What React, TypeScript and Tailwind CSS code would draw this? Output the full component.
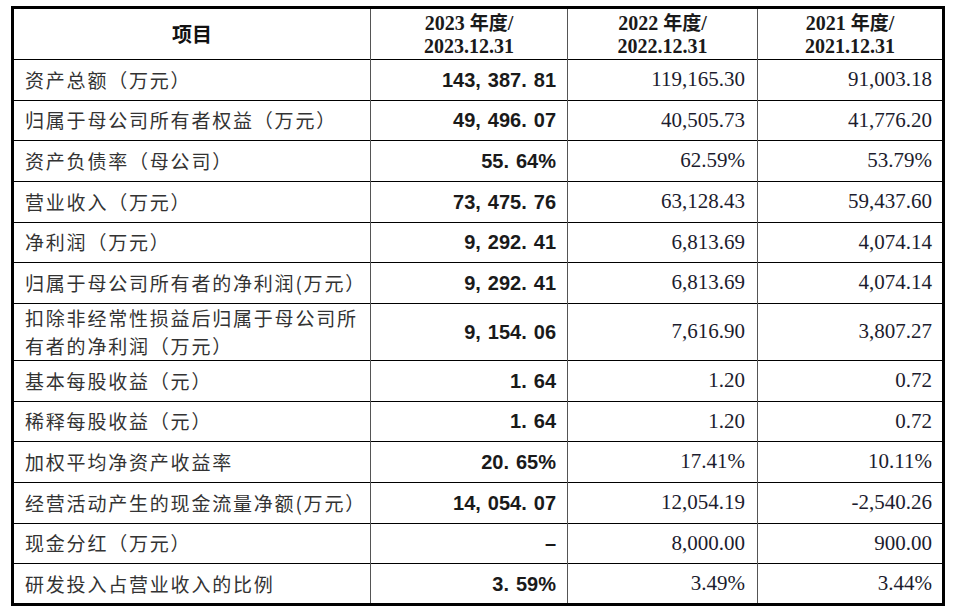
import React from 'react';

type Row = { label: React.ReactNode; cur: string; y22: string; y21: string; tall?: boolean };

const rows: Row[] = [
  { label: '资产总额（万元）', cur: '143,387.81', y22: '119,165.30', y21: '91,003.18' },
  { label: '归属于母公司所有者权益（万元）', cur: '49,496.07', y22: '40,505.73', y21: '41,776.20' },
  { label: '资产负债率（母公司）', cur: '55.64%', y22: '62.59%', y21: '53.79%' },
  { label: '营业收入（万元）', cur: '73,475.76', y22: '63,128.43', y21: '59,437.60' },
  { label: '净利润（万元）', cur: '9,292.41', y22: '6,813.69', y21: '4,074.14' },
  { label: '归属于母公司所有者的净利润(万元）', cur: '9,292.41', y22: '6,813.69', y21: '4,074.14' },
  {
    label: (
      <>
        扣除非经常性损益后归属于母公司所
        <br />
        有者的净利润（万元）
      </>
    ),
    cur: '9,154.06',
    y22: '7,616.90',
    y21: '3,807.27',
    tall: true,
  },
  { label: '基本每股收益（元）', cur: '1.64', y22: '1.20', y21: '0.72' },
  { label: '稀释每股收益（元）', cur: '1.64', y22: '1.20', y21: '0.72' },
  { label: '加权平均净资产收益率', cur: '20.65%', y22: '17.41%', y21: '10.11%' },
  { label: '经营活动产生的现金流量净额(万元）', cur: '14,054.07', y22: '12,054.19', y21: '-2,540.26' },
  { label: '现金分红（万元）', cur: '–', y22: '8,000.00', y21: '900.00' },
  { label: '研发投入占营业收入的比例', cur: '3.59%', y22: '3.49%', y21: '3.44%' },
];

// bold figures in the source use wide punctuation, so give "," and "." some room
function Wide({ text }: { text: string }) {
  return (
    <>
      {text.split('').map((c, i) =>
        c === ',' || c === '.' ? (
          <span key={i} className="mr-[7px]">
            {c}
          </span>
        ) : (
          <React.Fragment key={i}>{c}</React.Fragment>
        )
      )}
    </>
  );
}

export default function App() {
  return (
    <div className="w-[954px] h-[607px] bg-white pt-[6px] pl-[11px]">
      <table className="table-fixed border-collapse border-[3px] border-black w-[931px]">
        <colgroup>
          <col className="w-[358px]" />
          <col className="w-[197px]" />
          <col className="w-[190px]" />
          <col className="w-[186px]" />
        </colgroup>
        <thead>
          <tr className="h-[52px] border-b border-black">
            <th className="border-r border-[#555] text-[20px] font-bold text-[#111] font-['Noto_Sans_CJK_SC',sans-serif]">
              项目
            </th>
            {['2023', '2022', '2021'].map((y, i) => (
              <th
                key={y}
                className={`${i < 2 ? 'border-r border-[#555]' : ''} text-[20px] leading-[23px] font-bold text-[#1a1a1a] font-['Liberation_Serif','Noto_Sans_CJK_SC',serif]`}
              >
                <div>
                  {y} <span className="font-['Noto_Sans_CJK_SC',sans-serif] text-[19px]">年度</span>/
                </div>
                <div>{y}.12.31</div>
              </th>
            ))}
          </tr>
        </thead>
        <tbody>
          {rows.map((r, i) => (
            <tr key={i} className={`${r.tall ? 'h-[56px]' : 'h-[40.67px]'} border-b border-black`}>
              <td className="border-r border-[#555] pl-[11px] text-[19px] leading-[28px] tracking-[1.8px] text-[#333] font-['Noto_Sans_CJK_SC',sans-serif] whitespace-nowrap">
                {r.label}
              </td>
              <td className="border-r border-[#555] pr-[11px] text-right text-[20px] font-bold text-[#1a1a1a] font-['Liberation_Sans',sans-serif]">
                <Wide text={r.cur} />
              </td>
              <td className="border-r border-[#555] pr-[12px] text-right text-[21px] text-[#1c1c2e] font-['Liberation_Serif',serif]">
                {r.y22}
              </td>
              <td className="pr-[10px] text-right text-[21px] text-[#1c1c2e] font-['Liberation_Serif',serif]">
                {r.y21}
              </td>
            </tr>
          ))}
        </tbody>
      </table>
    </div>
  );
}
